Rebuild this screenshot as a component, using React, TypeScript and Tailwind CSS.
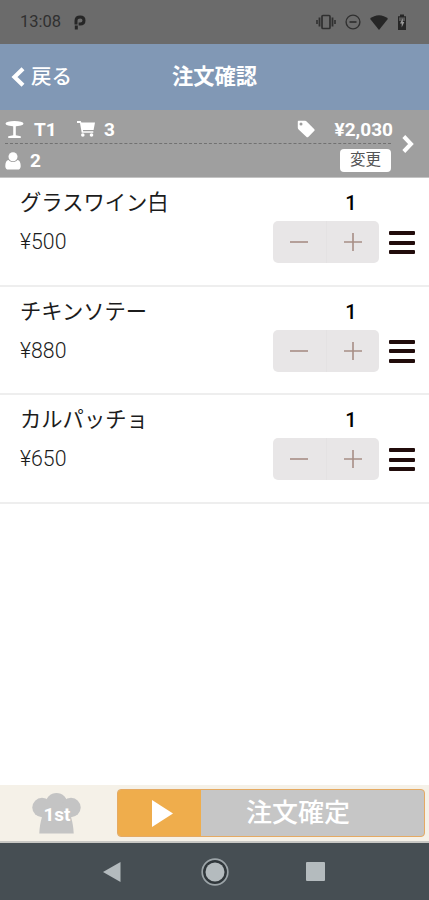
import { useState } from 'react';

interface OrderItem {
  id: number;
  name: string;
  price: number;
  quantity: number;
}

const initialItems: OrderItem[] = [
  { id: 1, name: 'グラスワイン白', price: 500, quantity: 1 },
  { id: 2, name: 'チキンソテー', price: 880, quantity: 1 },
  { id: 3, name: 'カルパッチョ', price: 650, quantity: 1 },
];

function StatusBar() {
  return (
    <div className="flex h-11 shrink-0 items-center bg-[#6b6b6b] pl-5 pr-[22px] text-[#303030]">
      <span className="text-[16.5px] leading-none">13:08</span>
      <svg className="ml-[13px] h-[15px] w-3" viewBox="0 0 12 15" fill="none" stroke="#262626">
        <path d="M2 9.5V5.8C2 3.4 3.8 2 6.2 2S10 3.4 10 5.5 8.4 9 6.2 9H4.6" strokeWidth="3" />
        <path d="M2.3 10.5v4" strokeWidth="3" />
      </svg>

      {/* Vibrate, do not disturb, wifi, battery */}
      <svg className="ml-auto h-4 w-5" viewBox="0 0 20 16" fill="none" stroke="currentColor">
        <rect x="6" y="1.5" width="8" height="13" rx="1" strokeWidth="1.7" />
        <path d="M3.5 3.5v9M16.5 3.5v9" strokeWidth="1.8" />
        <path d="M1 6v4M19 6v4" strokeWidth="1.6" />
      </svg>
      <svg className="ml-[9px] h-4 w-4" viewBox="0 0 16 16" fill="none" stroke="currentColor">
        <circle cx="8" cy="8" r="6.9" strokeWidth="1.4" />
        <path d="M4.5 8h7" strokeWidth="1.7" />
      </svg>
      <svg className="ml-[9px] h-[15px] w-[18px]" viewBox="0 0 18 15" fill="#262626">
        <path d="M0 3.8C5-.9 13-.9 18 3.8L9 15z" />
      </svg>
      <svg className="ml-[9px] h-4 w-[10px]" viewBox="0 0 10 16">
        <path d="M1 2.2h2V.4h4v1.8h2V16H1z" fill="#262626" />
        <path d="M2 3.4h6V7H2z" fill="#565656" />
        <path d="M5.8 4.2L3 9.4h1.7v4L7.3 8H5.8z" fill="#999" />
      </svg>
    </div>
  );
}

function Header() {
  return (
    <header className="grid h-[66px] shrink-0 grid-cols-[1fr_auto_1fr] items-center bg-[#8198b5] text-white">
      <button className="flex items-center pl-[11px]">
        <svg className="h-5 w-[14px]" viewBox="0 0 14 20" fill="none" stroke="white" strokeWidth="4.2">
          <path d="M12 1.7L3.5 10l8.5 8.3" />
        </svg>
        <span className="ml-[6px] text-[20.5px] font-medium leading-none">戻る</span>
      </button>
      <h1 className="text-[21.3px] font-bold leading-none">注文確認</h1>
    </header>
  );
}

function OrderSummary({ count, total }: { count: number; total: number }) {
  return (
    <section className="flex h-[68px] shrink-0 items-center border-b border-[#c4c4c4] bg-[#9f9f9f] text-[19px] font-bold leading-none text-white">
      <div className="ml-[5px] flex h-full w-[386px] flex-col">
        <div className="flex h-[34px] items-center border-b border-dashed border-[#717171] pt-[5px]">
          <svg className="h-[17px] w-[19px]" viewBox="0 0 19 17" fill="white">
            <ellipse cx="9.5" cy="2.7" rx="9" ry="2.7" />
            <path d="M8.2 4h2.6v10.3l5 1V17H3.2v-1.7l5-1z" />
          </svg>
          <span className="ml-[10px] w-[43px]">T1</span>
          <svg className="h-4 w-[18px]" viewBox="0 0 18 16" fill="white">
            <path d="M0 0h3.7l.7 1.5H18L16.6 9H6l.1 1.2h10.2v1.5H4.7L3 2H0z" />
            <circle cx="5.8" cy="14" r="1.8" />
            <circle cx="14.5" cy="14" r="1.8" />
          </svg>
          <span className="ml-[9px]">{count}</span>
          <svg className="ml-auto h-[18px] w-[18px]" viewBox="0 0 18 18">
            <path
              fill="white"
              fillRule="evenodd"
              d="M1.5.8h6.6c.6 0 1.1.2 1.5.6l7.5 7.5c.7.7.7 1.5 0 2.2l-5.6 5.7c-.7.7-1.5.7-2.2 0L1.6 9.5C1.2 9 .8 8.4.8 7.8V1.5c0-.4.3-.7.7-.7zM4 2.6a1.5 1.5 0 1 0 0 3 1.5 1.5 0 0 0 0-3z"
            />
          </svg>
          <span className="ml-[20px] -mr-[2px]">¥{total.toLocaleString('en-US')}</span>
        </div>
        <div className="flex h-[33px] items-center">
          <svg className="h-[18px] w-4" viewBox="0 0 16 18" fill="white">
            <circle cx="8" cy="4.7" r="4.5" />
            <path d="M3.6 8C5.8 10.7 10.2 10.7 12.4 8c2.2.3 3.3 2.5 3.3 6.2 0 2-1.2 3.4-3 3.4H3.3c-1.8 0-3-1.4-3-3.4C.3 10.500 1.400 8.300 3.600 8z" />
          </svg>
          <span className="ml-[9px]">2</span>
          <button className="ml-auto h-[23px] w-[51px] rounded-[4px] bg-white text-[15.5px] font-normal leading-none text-[#555]">
            変更
          </button>
        </div>
      </div>
      <svg className="ml-[11px] h-[18px] w-3" viewBox="0 0 12 18" fill="none" stroke="white" strokeWidth="4">
        <path d="M1.8 1.5L9 9l-7.200 7.500" />
      </svg>
    </section>
  );
}

interface OrderRowProps {
  item: OrderItem;
  onChange: (id: number, diff: number) => void;
}

function OrderRow({ item, onChange }: OrderRowProps) {
  return (
    <li className="flex h-[108.500px] border-b-2 border-[#eee] pl-5 pr-[14px]">
      <div className="flex-1 pt-[13px]">
        <p className="text-[21.3px] leading-6 text-[#1c1c1c]">{item.name}</p>
        <p className="mt-[15px] text-[21.3px] font-light leading-6 text-[#1c1c1c]">¥{item.price}</p>
      </div>
      <div className="w-[106px] pt-[13px]">
        <p className="ml-[50px] w-14 text-center text-[20px] font-medium leading-6 text-black">{item.quantity}</p>
        <div className="mt-[6px] flex h-[42px] rounded-[5px] bg-[#e8e6e7]">
          <button className="flex flex-1 items-center justify-center" onClick={() => onChange(item.id, -1)}>
            <svg className="h-[18px] w-[18px]" viewBox="0 0 18 18" stroke="#a78e86" strokeWidth="1.600">
              <path d="M0 9h18" />
            </svg>
          </button>
          <button
            className="flex flex-1 items-center justify-center border-l border-[#e4e2e3]"
            onClick={() => onChange(item.id, 1)}
          >
            <svg className="h-[18px] w-[18px]" viewBox="0 0 18 18" stroke="#a78e86" strokeWidth="1.600">
              <path d="M0 9h18M9 0v18" />
            </svg>
          </button>
        </div>
      </div>
      <button className="ml-[10px] mt-[53px] flex h-[23px] w-[26px] flex-col justify-between">
        <span className="h-[4px] w-full rounded-[1px] bg-[#210c0b]" />
        <span className="h-[4px] w-full rounded-[1px] bg-[#210c0b]" />
        <span className="h-[4px] w-full rounded-[1px] bg-[#210c0b]" />
      </button>
    </li>
  );
}

function Footer() {
  return (
    <footer className="flex h-[58px] shrink-0 items-center border-b-2 border-[#c9c8c4] bg-[#f5f1e8] pl-8 pr-1">
      <svg className="h-[41px] w-[49px]" viewBox="0 0 49 41">
        <g fill="#c4c4c4">
          <circle cx="10" cy="14.500" r="9.700" />
          <circle cx="24.500" cy="11" r="11" />
          <circle cx="39" cy="14.500" r="9.700" />
          <path d="M10 14h29v10c1.500 5 2.500 10 2.700 16.500H7.300C7.500 34 8.500 29 10 24z" />
        </g>
        <text x="25" y="28" textAnchor="middle" fontSize="19" fontWeight="700" fill="white">
          1st
        </text>
      </svg>
      <button className="ml-9 flex h-12 flex-1 overflow-hidden rounded-[4px] border border-[#e5aa63] bg-[#c6c6c6]">
        <span className="flex h-full w-[83px] items-center justify-center bg-[#efad4c]">
          <svg className="ml-[5px] h-[27px] w-[21px]" viewBox="0 0 21 27" fill="white">
            <path d="M0 0l21 13.500L0 27z" />
          </svg>
        </span>
        <span className="flex h-full flex-1 items-center justify-center pr-[29px] text-[26px] font-medium leading-none text-white">
          注文確定
        </span>
      </button>
    </footer>
  );
}

function NavigationBar() {
  return (
    <nav className="flex h-[57px] shrink-0 items-center bg-[#464e53] pl-[103px]">
      <svg className="h-5 w-[18px]" viewBox="0 0 18 20">
        <path d="M17.500 0v20L0 10z" fill="#b4bbbe" />
      </svg>
      <svg className="ml-20 h-7 w-7" viewBox="0 0 28 28">
        <circle cx="14" cy="14" r="12.800" fill="#30373b" stroke="#9ca4a8" strokeWidth="1.700" />
        <circle cx="14" cy="14" r="9.500" fill="#b4bbbe" />
      </svg>
      <span className="ml-[77px] h-[19px] w-[19px] rounded-[1px] bg-[#b4bbbe]" />
    </nav>
  );
}

export default function App() {
  const [items, setItems] = useState<OrderItem[]>(initialItems);

  const changeQuantity = (id: number, diff: number) => {
    setItems((prev) =>
      prev.map((item) => (item.id === id ? { ...item, quantity: Math.max(0, item.quantity + diff) } : item))
    );
  };

  const count = items.reduce((sum, item) => sum + item.quantity, 0);
  const total = items.reduce((sum, item) => sum + item.price * item.quantity, 0);

  return (
    <div className="flex h-screen w-full flex-col overflow-hidden bg-white font-[Roboto,'Noto_Sans_CJK_JP',sans-serif]">
      <StatusBar />
      <Header />
      <OrderSummary count={count} total={total} />
      <ul className="flex-1">
        {items.map((item) => (
          <OrderRow key={item.id} item={item} onChange={changeQuantity} />
        ))}
      </ul>
      <Footer />
      <NavigationBar />
    </div>
  );
}
